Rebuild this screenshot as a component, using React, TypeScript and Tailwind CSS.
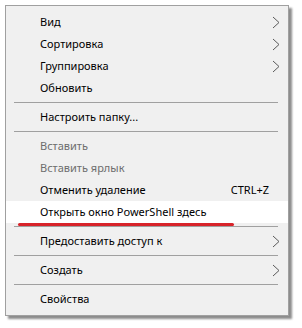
import React from 'react'

type Item =
  | { kind: 'sep' }
  | { kind: 'item'; label: string; sub?: boolean; disabled?: boolean; shortcut?: string; hover?: boolean }

const items: Item[] = [
  { kind: 'item', label: 'Вид', sub: true },
  { kind: 'item', label: 'Сортировка', sub: true },
  { kind: 'item', label: 'Группировка', sub: true },
  { kind: 'item', label: 'Обновить' },
  { kind: 'sep' },
  { kind: 'item', label: 'Настроить папку...' },
  { kind: 'sep' },
  { kind: 'item', label: 'Вставить', disabled: true },
  { kind: 'item', label: 'Вставить ярлык', disabled: true },
  { kind: 'item', label: 'Отменить удаление', shortcut: 'CTRL+Z' },
  { kind: 'item', label: 'Открыть окно PowerShell здесь', hover: true },
  { kind: 'sep' },
  { kind: 'item', label: 'Предоставить доступ к', sub: true },
  { kind: 'sep' },
  { kind: 'item', label: 'Создать', sub: true },
  { kind: 'sep' },
  { kind: 'item', label: 'Свойства' },
]

function Chevron() {
  return (
    <svg width="8" height="13" viewBox="0 0 8 13" className="shrink-0">
      <path d="M1 1 L7 6.5 L1 12" fill="none" stroke="#5a5a5a" strokeWidth="1" />
    </svg>
  )
}

export default function App() {
  return (
    <div className="w-[302px] h-[328px] bg-white pt-[5px] pl-[5px] font-['Noto_Sans','Segoe_UI',sans-serif]">
      <div className="relative w-[284px] border border-[#a0a0a0] bg-[#f0f0f0] py-[5px] shadow-[3px_3px_2px_rgba(0,0,0,0.45)]">
        {items.map((it, i) =>
          it.kind === 'sep' ? (
            <div key={i} className="py-[3px] pl-[8px] pr-[10px]">
              <div className="h-px bg-[#a0a0a0]" />
            </div>
          ) : (
            <div
              key={i}
              className={`flex h-[22px] items-center pl-[34px] pr-[8px] text-[11px] ${
                it.hover ? 'bg-white' : ''
              } ${it.disabled ? 'text-[#6d6d6d]' : 'text-black'}`}
            >
              <span className="flex-1 whitespace-nowrap">{it.label}</span>
              {it.shortcut && <span className="mr-[11px] whitespace-nowrap">{it.shortcut}</span>}
              {it.sub && <Chevron />}
            </div>
          )
        )}
        {/* красная пометка под PowerShell */}
        <div className="absolute left-[12px] top-[217px] h-[3px] w-[216px] rounded-full bg-[#d8232a]" />
      </div>
    </div>
  )
}
